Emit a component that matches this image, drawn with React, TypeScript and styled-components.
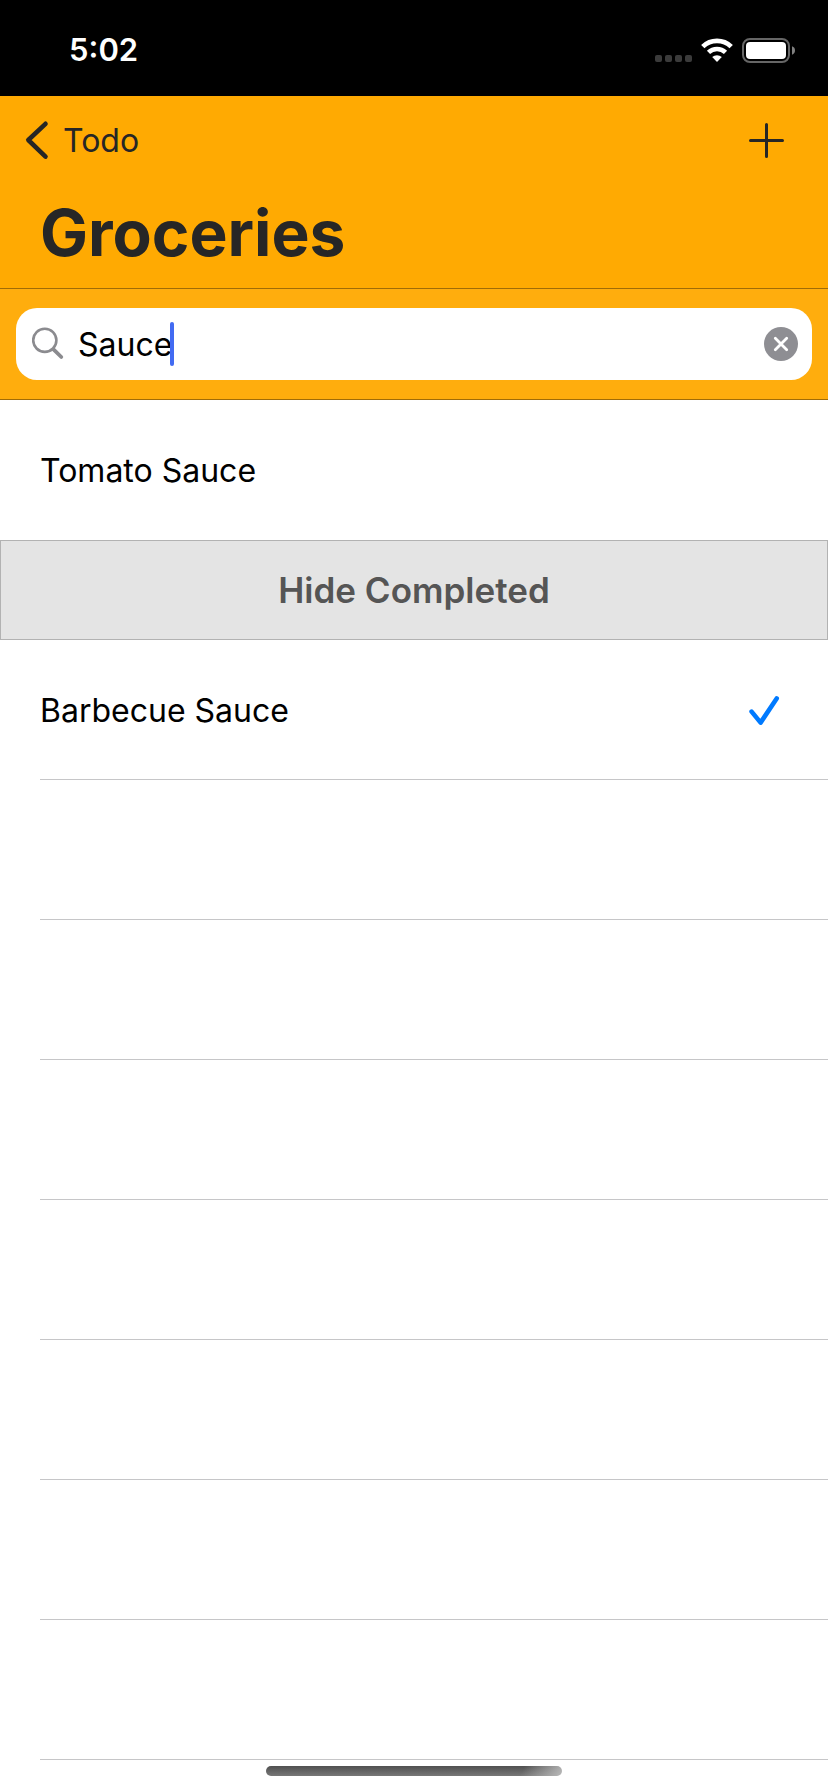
import React, { useState } from "react";
import styled, { createGlobalStyle } from "styled-components";

const GlobalStyle = createGlobalStyle`
  *, *::before, *::after { box-sizing: border-box; }
  body {
    margin: 0;
    background: #fff;
    color: #000;
    font-family: Inter, "Liberation Sans", sans-serif;
    font-size: 32px;
    line-height: 40px;
  }
  button, input { font: inherit; color: inherit; }
`;

const ink = "#262626";

const Screen = styled.div`
  display: flex;
  flex-direction: column;
  min-height: 100vh;
`;

const StatusBar = styled.div`
  display: flex;
  align-items: center;
  justify-content: space-between;
  height: 96px;
  padding: 4px 33px 0 69px;
  background: #000;
  color: #fff;
`;

const Clock = styled.time`
  font-size: 31px;
  font-weight: 600;
`;

const StatusIcons = styled.div`
  display: flex;
  align-items: center;
  gap: 9px;

  svg { display: block; }
`;

const Header = styled.header`
  background: #ffaa02;
  color: ${ink};
  border-bottom: 1px solid #a16c06;
`;

const NavBar = styled.nav`
  display: flex;
  align-items: center;
  justify-content: space-between;
  height: 88px;
  padding: 0 44px 0 24px;
`;

const BackLink = styled.a`
  display: flex;
  align-items: center;
  gap: 13px;
  color: inherit;
  text-decoration: none;
`;

const BackLabel = styled.span`
  padding-top: 2px;
`;

const IconButton = styled.button`
  display: flex;
  flex: none;
  padding: 0;
  border: 0;
  background: none;
  cursor: pointer;
`;

const Title = styled.h1`
  margin: 0;
  padding: 9px 40px 15px;
  font-size: 64px;
  font-weight: 700;
  line-height: 80px;
`;

const SearchBar = styled.form`
  padding: 19px 16px;
  background: #ffad0d;
  border-bottom: 1px solid #a16c06;
`;

const SearchField = styled.label`
  display: flex;
  align-items: center;
  height: 72px;
  padding: 0 14px 0 16px;
  border-radius: 21px;
  background: #fff;
`;

const SearchInput = styled.input`
  field-sizing: content;
  min-width: 2px;
  margin: 0 -2px 0 14px;
  padding: 2px 0 0;
  border: 0;
  outline: 0;
  background: none;
  color: #000;
  caret-color: transparent;
`;

const Caret = styled.span`
  width: 4px;
  height: 44px;
  margin-right: auto;
  border-radius: 2px;
  background: #426bf2;
`;

const List = styled.ul`
  margin: 0;
  padding: 0 0 0 40px;
  list-style: none;
`;

const Row = styled.li<{ $divider?: boolean }>`
  display: flex;
  align-items: center;
  justify-content: space-between;
  height: 140px;
  padding: 2px 48px 0 0;
  border-bottom: ${(p) => (p.$divider ? "1px solid #c6c6c8" : "0")};
`;

const ToggleButton = styled.button`
  height: 100px;
  width: 100%;
  padding: 0;
  border: 1px solid #b2b2b2;
  background: #e4e4e4;
  color: #555;
  font-size: 35px;
  font-weight: 600;
  cursor: pointer;
`;

const HomeIndicator = styled.div`
  position: fixed;
  bottom: 16px;
  left: 50%;
  width: 296px;
  height: 10px;
  transform: translateX(-50%);
  border-radius: 5px;
  background:
    linear-gradient(115deg, transparent 86%, #b8b8b8 100%),
    linear-gradient(#505050, #777);
`;

const SignalDots = () => (
  <svg width="37" height="24" viewBox="0 0 37 24" fill="#3b3b3b" aria-hidden="true">
    {[0, 10, 20, 30].map((x) => (
      <rect key={x} x={x} y="17" width="7" height="7" rx="2" />
    ))}
  </svg>
);

const Wifi = () => (
  <svg width="32" height="24" viewBox="0 0 32 24" fill="none" aria-hidden="true">
    <path d="M1.8 8.6a20.4 20.4 0 0 1 28.4 0" stroke="#fff" strokeWidth="4.8" />
    <path d="M7.5 14.4a12.3 12.3 0 0 1 17 0" stroke="#fff" strokeWidth="4.6" />
    <path d="M16 24l-4.8-4.9a7 7 0 0 1 9.6 0z" fill="#fff" />
  </svg>
);

const Battery = () => (
  <svg width="53" height="25" viewBox="0 0 53 25" aria-hidden="true">
    <rect x="1" y="1" width="46" height="23" rx="7" fill="none" stroke="#666" strokeWidth="2" />
    <rect x="4" y="4" width="40" height="17" rx="4" fill="#fff" />
    <path d="M50 8.300c2 .6 3 2.200 3 4.200s-1 3.600-3 4.200z" fill="#808080" />
  </svg>
);

const ChevronLeft = () => (
  <svg width="26" height="40" viewBox="0 0 26 40" fill="none" stroke={ink} strokeWidth="4.600" strokeLinecap="round" strokeLinejoin="round" aria-hidden="true">
    <path d="M21.500 3.800L4.300 20l17.200 16.600" />
  </svg>
);

const Plus = () => (
  <svg width="35" height="35" viewBox="0 0 35 35" stroke={ink} strokeWidth="3" strokeLinecap="round" aria-hidden="true">
    <path d="M17.500 1.500v32M1.500 17.500h32" />
  </svg>
);

const Magnifier = () => (
  <svg width="32" height="34" viewBox="0 0 32 34" fill="none" stroke="#8b8b8f" strokeLinecap="round" aria-hidden="true">
    <circle cx="12.800" cy="13.300" r="11.600" strokeWidth="2.600" />
    <path d="M21.500 22.300l7.800 7.700" strokeWidth="3.800" />
  </svg>
);

const ClearIcon = () => (
  <svg width="34" height="34" viewBox="0 0 34 34" aria-hidden="true">
    <circle cx="17" cy="17" r="17" fill="#8e8e93" />
    <path d="M11.300 11.300l11.400 11.400M22.700 11.300L11.300 22.700" stroke="#fff" strokeWidth="2.800" strokeLinecap="round" />
  </svg>
);

const Check = () => (
  <svg width="32" height="32" viewBox="0 0 32 32" fill="none" stroke="#007aff" strokeWidth="4.600" strokeLinecap="round" strokeLinejoin="round" role="img" aria-label="Completed">
    <path d="M3.600 16.600l9 11L28.700 3.500" />
  </svg>
);

const emptyRows = 7;

export default function App() {
  const [query, setQuery] = useState("Sauce");

  return (
    <Screen>
      <GlobalStyle />
      <StatusBar>
        <Clock>5:02</Clock>
        <StatusIcons>
          <SignalDots />
          <Wifi />
          <Battery />
        </StatusIcons>
      </StatusBar>
      <Header>
        <NavBar>
          <BackLink href="#todo">
            <ChevronLeft />
            <BackLabel>Todo</BackLabel>
          </BackLink>
          <IconButton type="button" aria-label="Add item">
            <Plus />
          </IconButton>
        </NavBar>
        <Title>Groceries</Title>
      </Header>
      <SearchBar role="search" onSubmit={(e) => e.preventDefault()}>
        <SearchField>
          <Magnifier />
          <SearchInput
            type="text"
            aria-label="Search items"
            value={query}
            onChange={(e) => setQuery(e.target.value)}
          />
          <Caret />
          <IconButton type="button" aria-label="Clear search" onClick={() => setQuery("")}>
            <ClearIcon />
          </IconButton>
        </SearchField>
      </SearchBar>
      <main>
        <List>
          <Row>Tomato Sauce</Row>
        </List>
        <ToggleButton type="button">Hide Completed</ToggleButton>
        <List>
          <Row $divider>
            Barbecue Sauce
            <Check />
          </Row>
          {Array.from({ length: emptyRows }, (_, i) => (
            <Row key={i} $divider aria-hidden="true" />
          ))}
        </List>
      </main>
      <HomeIndicator />
    </Screen>
  );
}
